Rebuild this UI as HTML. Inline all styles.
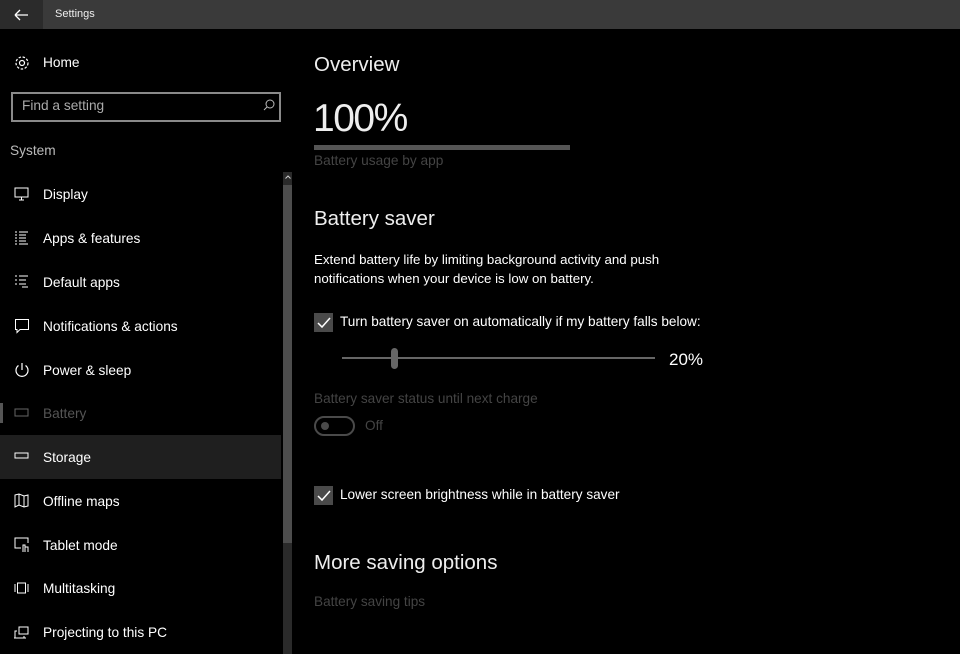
<!DOCTYPE html>
<html><head><style>
body{margin:0;width:960px;height:654px;background:#000;overflow:hidden;font-family:"Liberation Sans",sans-serif;color:#fff;position:relative}
.a{position:absolute;white-space:nowrap}
.tb{left:0;top:0;width:960px;height:29px;background:#3a3a3a}
.bk{left:0;top:0;width:43px;height:29px;background:#2b2b2b}
.nav{left:43px;font-size:13.7px}
svg{position:absolute;overflow:visible}
</style></head><body>
<div class="a tb"></div><div class="a bk"></div>
<svg style="left:14px;top:8px" width="16" height="14"><path d="M1 7H14M1 7L6 2M1 7L6 12" stroke="#fff" stroke-width="1.3" fill="none"/></svg>
<div class="a" style="left:55px;top:8px;font-size:11px;color:#eee">Settings</div>

<svg style="left:14px;top:55px" width="16" height="16"><circle cx="8" cy="8" r="2.5" stroke="#fff" fill="none" stroke-width="1.2"/><circle cx="8" cy="8" r="6" stroke="#fff" fill="none" stroke-width="1.2" stroke-dasharray="2.5 1.6"/></svg>
<div class="a nav" style="top:55px">Home</div>
<div class="a" style="left:11px;top:92px;width:266px;height:26px;border:2px solid #8a8a8a"></div>
<div class="a" style="left:22px;top:98px;font-size:13.7px;color:#aaa">Find a setting</div>
<svg style="left:263px;top:99px" width="12" height="12"><circle cx="7" cy="5" r="4" stroke="#bbb" fill="none"/><path d="M4 8L1 11" stroke="#bbb"/></svg>
<div class="a" style="left:10px;top:143px;font-size:13.7px;color:#bbb">System</div>

<div class="a" style="left:0;top:435px;width:281px;height:44px;background:#1f1f1f"></div>
<div class="a" style="left:0;top:403px;width:3px;height:20px;background:#555"></div>

<svg style="left:14px;top:187px" width="16" height="14"><rect x="1" y="1" width="13" height="9" stroke="#fff" fill="none"/><path d="M7.5 10V13M5 13H10" stroke="#fff"/></svg>
<div class="a nav" style="top:187px">Display</div>
<svg style="left:14px;top:231px" width="16" height="14"><path d="M1 1H3M1 4H3M1 7H3M1 10H3M1 13H3M5 1H14M5 4H12M5 7H12M5 10H12M5 13H14" stroke="#fff"/></svg>
<div class="a nav" style="top:231px">Apps &amp; features</div>
<svg style="left:14px;top:275px" width="16" height="14"><path d="M1 1H3M1 5H3M1 9H3M5 1H14M5 5H12M5 9H12M8 12H14" stroke="#fff"/></svg>
<div class="a nav" style="top:275px">Default apps</div>
<svg style="left:14px;top:318px" width="16" height="16"><path d="M1.5 1.5H14.5V11.5H6L3 14.5V11.5H1.5Z" stroke="#fff" fill="none"/></svg>
<div class="a nav" style="top:319px">Notifications &amp; actions</div>
<svg style="left:14px;top:362px" width="16" height="16"><path d="M4.5 3.5A6 6 0 1 0 11.5 3.5M8 1V8" stroke="#fff" fill="none" stroke-width="1.2"/></svg>
<div class="a nav" style="top:363px">Power &amp; sleep</div>
<svg style="left:14px;top:408px" width="16" height="10"><rect x="1" y="1" width="13" height="7" stroke="#666" fill="none"/></svg>
<div class="a nav" style="top:406px;color:#555">Battery</div>
<svg style="left:14px;top:452px" width="16" height="10"><rect x="1" y="1" width="13" height="5" stroke="#fff" fill="none"/></svg>
<div class="a nav" style="top:450px">Storage</div>
<svg style="left:14px;top:493px" width="16" height="16"><path d="M1 2L5 1L10 3L14 2V13L10 14L5 12L1 14ZM5 1V12M10 3V14" stroke="#fff" fill="none"/></svg>
<div class="a nav" style="top:494px">Offline maps</div>
<svg style="left:14px;top:537px" width="16" height="16"><path d="M7 11H1V1H14V6" stroke="#fff" fill="none"/><path d="M9 15V8H11V15M11 10H14V15" stroke="#fff" fill="none"/></svg>
<div class="a nav" style="top:538px">Tablet mode</div>
<svg style="left:14px;top:582px" width="16" height="12"><path d="M1 2V10M14 2V10" stroke="#fff"/><rect x="3.5" y="1" width="8" height="10" stroke="#fff" fill="none"/></svg>
<div class="a nav" style="top:581px">Multitasking</div>
<svg style="left:14px;top:626px" width="16" height="14"><rect x="5" y="1" width="9" height="7" stroke="#fff" fill="none"/><path d="M3 5H1V12H10V10M0 12H12" stroke="#fff" fill="none"/></svg>
<div class="a nav" style="top:625px">Projecting to this PC</div>

<div class="a" style="left:283px;top:172px;width:9px;height:482px;background:#2a2a2a"></div>
<div class="a" style="left:283px;top:185px;width:9px;height:358px;background:#4d4d4d"></div>
<svg style="left:284px;top:174px" width="8" height="6"><path d="M1.5 4.5L4 2L6.5 4.5" stroke="#ccc" fill="none"/></svg>

<div class="a" style="left:314px;top:53px;font-size:20.5px;color:#eee">Overview</div>
<div class="a" style="left:313px;top:97px;font-size:39px;letter-spacing:-1.5px;color:#eee">100%</div>
<div class="a" style="left:314px;top:145px;width:256px;height:5px;background:#555"></div>
<div class="a" style="left:314px;top:153px;font-size:13.7px;color:#444">Battery usage by app</div>
<div class="a" style="left:314px;top:207px;font-size:20.5px;color:#eee">Battery saver</div>
<div class="a" style="left:314px;top:250px;font-size:13.3px;line-height:19px">Extend battery life by limiting background activity and push<br>notifications when your device is low on battery.</div>

<div class="a" style="left:314px;top:313px;width:19px;height:19px;background:#4a4a4a"></div>
<svg style="left:316px;top:315px" width="16" height="16"><path d="M2 8L6 12L14 3" stroke="#fff" stroke-width="1.5" fill="none"/></svg>
<div class="a" style="left:340px;top:314px;font-size:13.6px">Turn battery saver on automatically if my battery falls below:</div>
<div class="a" style="left:342px;top:357px;width:313px;height:2px;background:#666"></div>
<div class="a" style="left:391px;top:348px;width:7px;height:21px;border-radius:4px;background:#666"></div>
<div class="a" style="left:669px;top:350px;font-size:17px">20%</div>
<div class="a" style="left:314px;top:391px;font-size:13.6px;color:#444">Battery saver status until next charge</div>
<div class="a" style="left:314px;top:416px;width:37px;height:16px;border:2px solid #4a4a4a;border-radius:10px"></div>
<div class="a" style="left:321px;top:422px;width:8px;height:8px;border-radius:50%;background:#4a4a4a"></div>
<div class="a" style="left:365px;top:418px;font-size:13.6px;color:#444">Off</div>

<div class="a" style="left:314px;top:486px;width:19px;height:19px;background:#4a4a4a"></div>
<svg style="left:316px;top:488px" width="16" height="16"><path d="M2 8L6 12L14 3" stroke="#fff" stroke-width="1.5" fill="none"/></svg>
<div class="a" style="left:340px;top:487px;font-size:13.6px">Lower screen brightness while in battery saver</div>
<div class="a" style="left:314px;top:551px;font-size:20.5px;color:#eee">More saving options</div>
<div class="a" style="left:314px;top:594px;font-size:13.6px;color:#444">Battery saving tips</div>
</body></html>
